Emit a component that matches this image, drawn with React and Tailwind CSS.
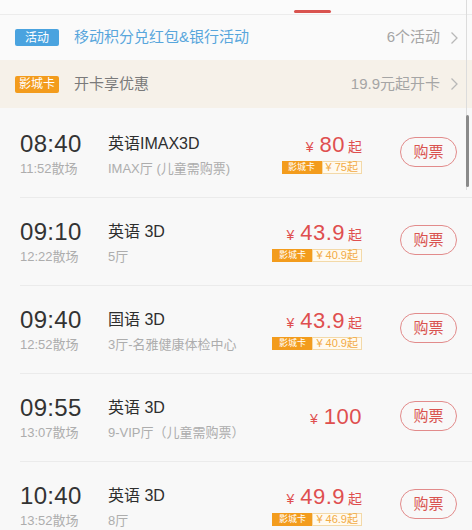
const font = { fontFamily: '"Liberation Sans", "Noto Sans CJK SC", sans-serif' }

const shows = [
  { start: "08:40", end: "11:52", lang: "英语IMAX3D", hall: "IMAX厅 (儿童需购票)", price: "80", card: "75" },
  { start: "09:10", end: "12:22", lang: "英语 3D", hall: "5厅", price: "43.9", card: "40.9" },
  { start: "09:40", end: "12:52", lang: "国语 3D", hall: "3厅-名雅健康体检中心", price: "43.9", card: "40.9" },
  { start: "09:55", end: "13:07", lang: "英语 3D", hall: "9-VIP厅（儿童需购票）", price: "100", card: null },
  { start: "10:40", end: "13:52", lang: "英语 3D", hall: "8厅", price: "49.9", card: "46.9" },
]

export default function App() {
  return (
    <div className="relative w-[472px] h-[530px] overflow-hidden bg-[#f8f8f8]" style={font}>

      {/* tab strip */}
      <div className="h-[15px] bg-[#fbfbfb] border-b border-[#ececec] flex">
        <div className="ml-[294px] mt-[10px] w-[37px] h-[3px] bg-[#d9534f] rounded-sm" />
      </div>

      {/* activity row */}
      <div className="h-[45px] bg-[#fafafa] flex items-center pl-[15px] pr-[13px]">
        <span className="w-[44px] h-[17px] bg-[#4aa3df] text-white text-[12px] rounded-[2px] flex items-center justify-center">活动</span>
        <span className="ml-[15px] text-[15px] text-[#58a6dc]">移动积分兑红包&amp;银行活动</span>
        <span className="ml-auto text-[15px] text-[#a5a5a5]">6个活动</span>
        <Chevron />
      </div>

      {/* card row */}
      <div className="h-[48px] bg-[#f6f1e9] flex items-center pl-[15px] pr-[13px]">
        <span className="w-[44px] h-[17px] bg-[#f39c1d] text-white text-[12px] rounded-[2px] flex items-center justify-center">影城卡</span>
        <span className="ml-[15px] text-[15px] text-[#7a7a7a]">开卡享优惠</span>
        <span className="ml-auto text-[15px] text-[#a5a5a5]">19.9元起开卡</span>
        <Chevron />
      </div>

      {/* show list */}
      <div className="pt-[2px]">
        {shows.map((s, i) => (
          <div key={i} className="ml-[20px] h-[88px] flex items-center border-b border-[#ebebeb]">
            <div className="w-[88px]">
              <div className="text-[24px] leading-[26px] text-[#333] tracking-[0.3px]">{s.start}</div>
              <div className="mt-[4px] text-[13px] leading-[16px] text-[#adadad]">{s.end}散场</div>
            </div>
            <div className="flex-1">
              <div className="text-[16px] leading-[26px] text-[#2e2e2e]">{s.lang}</div>
              <div className="mt-[4px] text-[13px] leading-[16px] text-[#adadad]">{s.hall}</div>
            </div>
            <div className="flex flex-col items-end">
              <div className="flex items-baseline text-[#df4f4f] leading-[24px]">
                <span className="text-[14px] mr-[6px]">¥</span>
                <span className="text-[22px] tracking-[0.5px]">{s.price}</span>
                {s.card && <span className="text-[14px] ml-[3px]">起</span>}
              </div>
              {s.card && (
                <div className="mt-[2px] flex h-[13px] text-[9px] leading-[13px]">
                  <span className="w-[40px] bg-[#f39c1d] text-white text-center">影城卡</span>
                  <span className="px-[3px] border border-[#f3d9a8] bg-[#fffaf0] text-[#f2ab45] leading-[11px] text-[11px]">¥ {s.card}起</span>
                </div>
              )}
            </div>
            <button className="ml-[38px] mr-[15px] mb-[3px] w-[57px] h-[30px] rounded-full border border-[#e28b8b] text-[#d9534f] text-[15px] flex items-center justify-center">
              购票
            </button>
          </div>
        ))}
      </div>

      {/* scrollbar */}
      <div className="absolute right-[5px] top-0 w-[1px] h-[190px] bg-[#dcdcdc]" />
      <div className="absolute right-[3px] top-[115px] w-[3px] h-[72px] rounded-full bg-[#8a8a8a]" />
    </div>
  )
}

function Chevron() {
  return (
    <svg width="9" height="14" viewBox="0 0 9 14" className="ml-[10px]">
      <path d="M1.5 1.5 L7 7 L1.5 12.5" fill="none" stroke="#b8b8b8" strokeWidth="1.3" />
    </svg>
  )
}
